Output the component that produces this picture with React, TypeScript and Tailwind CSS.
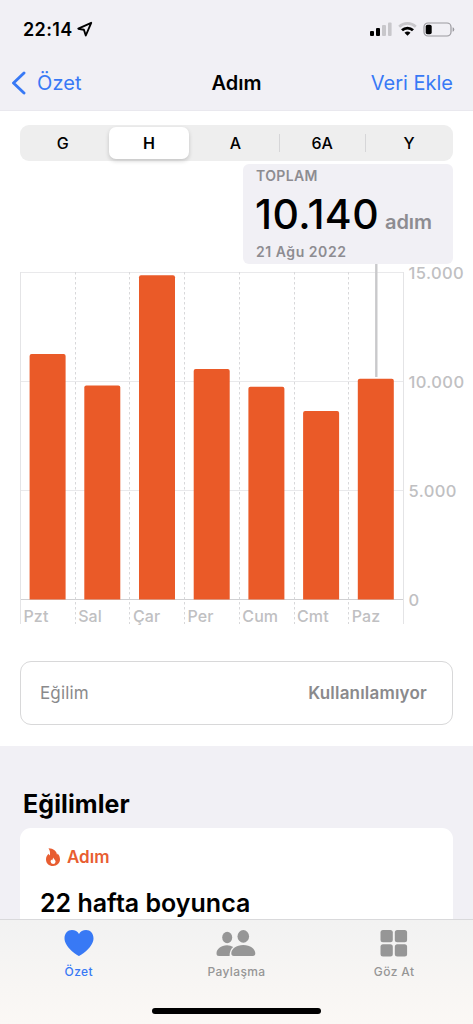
import React from 'react'

interface DayBar {
  label: string
  top: number
}

const days: DayBar[] = [
  { label: 'Pzt', top: 90 },
  { label: 'Sal', top: 121.5 },
  { label: 'Çar', top: 11.3 },
  { label: 'Per', top: 105 },
  { label: 'Cum', top: 122.7 },
  { label: 'Cmt', top: 147 },
  { label: 'Paz', top: 114.7 },
]

const gridLines = [
  { label: '15.000', y: 8.5 },
  { label: '10.000', y: 117.5 },
  { label: '5.000', y: 226.5 },
  { label: '0', y: 335.5 },
]

const ranges = ['G', 'H', 'A', '6A', 'Y']

const STEP = 54.7

function StatusBar() {
  return (
    <div className="flex h-[58px] items-center justify-between pl-[23px] pr-[18px]">
      <div className="flex items-center gap-[4px]">
        <span className="text-[18px] font-semibold tracking-[0.35px]">22:14</span>
        <svg className="h-4 w-4" viewBox="0 0 16 16" fill="none" stroke="#000" strokeWidth="1.9" strokeLinejoin="round">
          <path d="M14.2 1.8 1.3 7.7l5.600 1.100 1.900 5.700z" />
        </svg>
      </div>
      <div className="flex items-center gap-[6px]">
        <svg className="h-[14px] w-[23px]" viewBox="0 0 23 14">
          <rect x="1" y="9" width="4" height="5" rx="1" />
          <rect x="7" y="6" width="4" height="8" rx="1" />
          <rect x="13" y="3" width="4" height="11" rx="1" fill="#c8c7cb" />
          <rect x="19" y="0.5" width="3.6" height="13.5" rx="1" fill="#c8c7cb" />
        </svg>
        <svg className="h-[14px] w-[19px]" viewBox="0 0 19 14" fill="none">
          <path d="M1.2 4.8a12 12 0 0 1 16.6 0" stroke="#c8c7cb" strokeWidth="2.7" />
          <path d="M4 8.3a7.8 7.8 0 0 1 11 0" stroke="#000" strokeWidth="2.8" />
          <path d="M9.5 13.8 6.5 10.8a4.4 4.4 0 0 1 6 0z" fill="#000" />
        </svg>
        <svg className="h-[15px] w-[32px]" viewBox="0 0 32 15">
          <rect x="1" y="1" width="27" height="13" rx="4" fill="none" stroke="#9b9a9f" strokeWidth="1.2" />
          <rect x="2.7" y="2.7" width="6" height="9.6" rx="1.8" />
          <path d="M29.6 5.2v4.6q1.7-.6 1.7-2.3t-1.7-2.3z" fill="#9b9a9f" />
        </svg>
      </div>
    </div>
  )
}

function NavBar() {
  return (
    <div className="grid h-[53px] grid-cols-3 items-center border-b border-[#e9e8ee] pl-[11px] pr-5 pb-[2px] text-[20px]">
      <div className="flex items-center gap-[10px] text-[#3879f5]">
        <svg className="h-6 w-4" viewBox="0 0 16 24" fill="none" stroke="currentColor" strokeWidth="2.9" strokeLinecap="round" strokeLinejoin="round">
          <path d="M13 2 2.5 12 13 22" />
        </svg>
        <span className="tracking-[0.1px]">Özet</span>
      </div>
      <h1 className="pl-[9px] text-center font-semibold">Adım</h1>
      <span className="whitespace-nowrap text-right text-[#3879f5]">Veri Ekle</span>
    </div>
  )
}

function RangePicker() {
  return (
    <div className="grid h-9 grid-cols-5 rounded-[9px] bg-[#eeeeee] text-[16px] font-medium">
      {ranges.map((range, i) => (
        <div key={range} className="flex items-center py-0.5">
          <div
            className={
              range === 'H'
                ? 'ml-[2px] mr-[4px] flex h-8 grow items-center justify-center rounded-[7px] bg-white font-semibold shadow-[0_2px_4px_rgba(0,0,0,0.18)]'
                : 'grow pr-[1px] text-center'
            }
          >
            {range}
          </div>
          {(i === 2 || i === 3) && <span className="h-[18px] w-px bg-[#d6d6d8]" />}
        </div>
      ))}
    </div>
  )
}

function Callout() {
  return (
    <div className="mt-[3px] ml-auto h-[100px] w-[210px] rounded-[6px] bg-[#f1f0f5] pl-[13px] pt-[3px] font-semibold text-[#8d8c91]">
      <div className="text-[14px] leading-[18px] tracking-[0.35px]">TOPLAM</div>
      <div className="flex h-[58px] items-baseline gap-[6px] whitespace-nowrap">
        <span className="-ml-px text-[41px] font-medium leading-[58px] tracking-[0.4px] text-black">10.140</span>
        <span className="text-[20px] tracking-[-0.1px]">adım</span>
      </div>
      <div className="text-[14px] leading-[18px] tracking-[0.55px]">21 Ağu 2022</div>
    </div>
  )
}

function StepsChart() {
  return (
    <svg className="block h-[364px] w-[453px]" viewBox="0 0 453 364">
      {/* Grid */}
      {gridLines.map((line) => (
        <g key={line.label}>
          <line x1="0" x2="384" y1={line.y} y2={line.y} stroke={line.y > 300 ? '#d0d0d2' : '#e9e9eb'} />
          <text x="388.5" y={line.y + 6} fill="#c0c0c2" fontSize="16.5" fontWeight="500" letterSpacing="0.4">
            {line.label}
          </text>
        </g>
      ))}
      <line x1="0.5" x2="0.5" y1="8" y2="360" stroke="#e4e4e6" />
      <line x1="383.5" x2="383.5" y1="8" y2="360" stroke="#e4e4e6" />
      {days.slice(1).map((day, i) => {
        const x = Math.round((i + 1) * STEP) + 0.5
        return <line key={day.label} x1={x} x2={x} y1="8" y2="360" stroke="#d8d8da" strokeDasharray="2.5 2.5" />
      })}

      {/* Bars */}
      {days.map((day, i) => {
        const x = 9.6 + i * STEP
        return (
          <g key={day.label}>
            <path
              d={`M${x} 335.5V${day.top + 2}q0-2 2-2h32q2 0 2 2V335.5z`}
              fill="#ea5a28"
            />
            <text x={3.5 + i * STEP} y="358" fill="#c0c0c2" fontSize="16" fontWeight="500" letterSpacing="0.1">
              {day.label}
            </text>
          </g>
        )
      })}
      <line x1="356.3" x2="356.3" y1="0" y2="113" stroke="#c9c9cb" strokeWidth="2.4" />
    </svg>
  )
}

function TabBar() {
  return (
    <nav className="fixed inset-x-0 bottom-0 h-[105px] border-t border-[#d9d9db] bg-linear-to-b from-[#f2f2f2] to-[#fbf8f5]">
      <div className="grid grid-cols-3 pt-[8px] text-[12px] font-medium tracking-[0.4px] text-[#969696]">
        <div className="flex flex-col items-center gap-[6px] text-[#3879f5]">
          <svg className="h-[30px] w-[30px]" viewBox="0 0 30 30" fill="currentColor">
            <path d="M15 28C12.6 27 .5 19 .5 10.2.5 5.4 3.7 2 7.9 2c3.200 0 5.800 1.400 7.100 4C16.3 3.4 18.9 2 22.1 2c4.200 0 7.400 3.400 7.400 8.200C29.5 19 17.4 27 15 28z" />
          </svg>
          <span className="leading-[16px]">Özet</span>
        </div>
        <div className="flex flex-col items-center gap-[6px]">
          <svg className="h-[30px] w-10" viewBox="0 0 40 30" fill="currentColor">
            <ellipse cx="11.2" cy="9.5" rx="5" ry="5.7" />
            <path d="M.5 25.5C.5 21 5 17.3 11 17.3q3.5 0 6.2 1.6c-2.3 1.9-3.7 4.8-3.6 9.1H3Q.5 28 .5 25.5z" />
            <ellipse cx="27.3" cy="8.4" rx="5.8" ry="6.3" />
            <path d="M15.3 25.3c0-4.3 5-8.4 12-8.4s12 4.1 12 8.4q0 2.7-2.5 2.7h-19q-2.5 0-2.5-2.7z" />
          </svg>
          <span className="leading-[16px]">Paylaşma</span>
        </div>
        <div className="flex flex-col items-center gap-[6px]">
          <svg className="h-[30px] w-[30px]" viewBox="0 0 30 30" fill="currentColor">
            <rect x="1.5" y="2" width="12.3" height="12.3" rx="2.5" />
            <rect x="15.8" y="2" width="12.3" height="12.3" rx="2.5" />
            <rect x="1.5" y="16.2" width="12.3" height="12.3" rx="2.5" />
            <rect x="15.8" y="16.2" width="12.3" height="12.3" rx="2.5" />
          </svg>
          <span className="leading-[16px]">Göz At</span>
        </div>
      </div>
      <div className="mx-auto mt-[28px] h-[6px] w-[169px] rounded-full bg-black" />
    </nav>
  )
}

export default function App() {
  return (
    <div className="h-screen overflow-hidden bg-[#f1f0f5] font-['Inter',sans-serif] text-black">
      <StatusBar />
      <NavBar />

      <section className="h-[635px] bg-white pl-5 pt-[14px]">
        <div className="mr-[20px]">
          <RangePicker />
          <Callout />
        </div>
        <StepsChart />
        <div className="mr-[20px] mt-[33px] flex h-[64px] items-center justify-between rounded-[11px] border-[1.5px] border-[#d8d8d9] pl-[19px] pr-[25px] pt-[2px] text-[17px] text-[#8a8a8c]">
          <span className="tracking-[0.15px]">Eğilim</span>
          <span className="font-semibold tracking-[0.2px]">Kullanılamıyor</span>
        </div>
      </section>

      <section className="px-5 pt-[40px]">
        <h2 className="pl-[3px] text-[25px] font-bold leading-[36px] tracking-[0.1px]">Eğilimler</h2>
        <div className="mt-[6px] h-[200px] rounded-[11px] bg-white pl-[20px] pt-[18px]">
          <div className="flex items-center gap-[7px] pl-[6px] text-[17px] font-semibold leading-[22px] text-[#e85d31]">
            <svg className="h-[18px] w-[14px]" viewBox="0 0 14 18">
              <path
                d="M2.500.3C7.500.5 10.800 3.200 11 6.700q.5-.5.500-1.300C13.200 6.800 14 9 14 11.300 14 15.200 11 18 7 18s-7-2.800-7-6.600C0 9 1 7.200 2.600 5.800c.2.900.6 1.300 1.200 1.600C4.400 5 4 2.500 2.500.3z"
                fill="currentColor"
              />
              <path d="M7.200 9.500c.3 1.700 2.400 2.400 2.400 4.200A2.500 2.500 0 0 1 7.100 16a2.500 2.500 0 0 1-2.500-2.400q0-1.100.8-2 .2.600.7.800c.5-.9.9-1.800 1.100-2.900z" fill="#fff" />
            </svg>
            Adım
          </div>
          <p className="mt-[18px] text-[25px] font-semibold leading-[34px]">22 hafta boyunca</p>
        </div>
      </section>

      <TabBar />
    </div>
  )
}
